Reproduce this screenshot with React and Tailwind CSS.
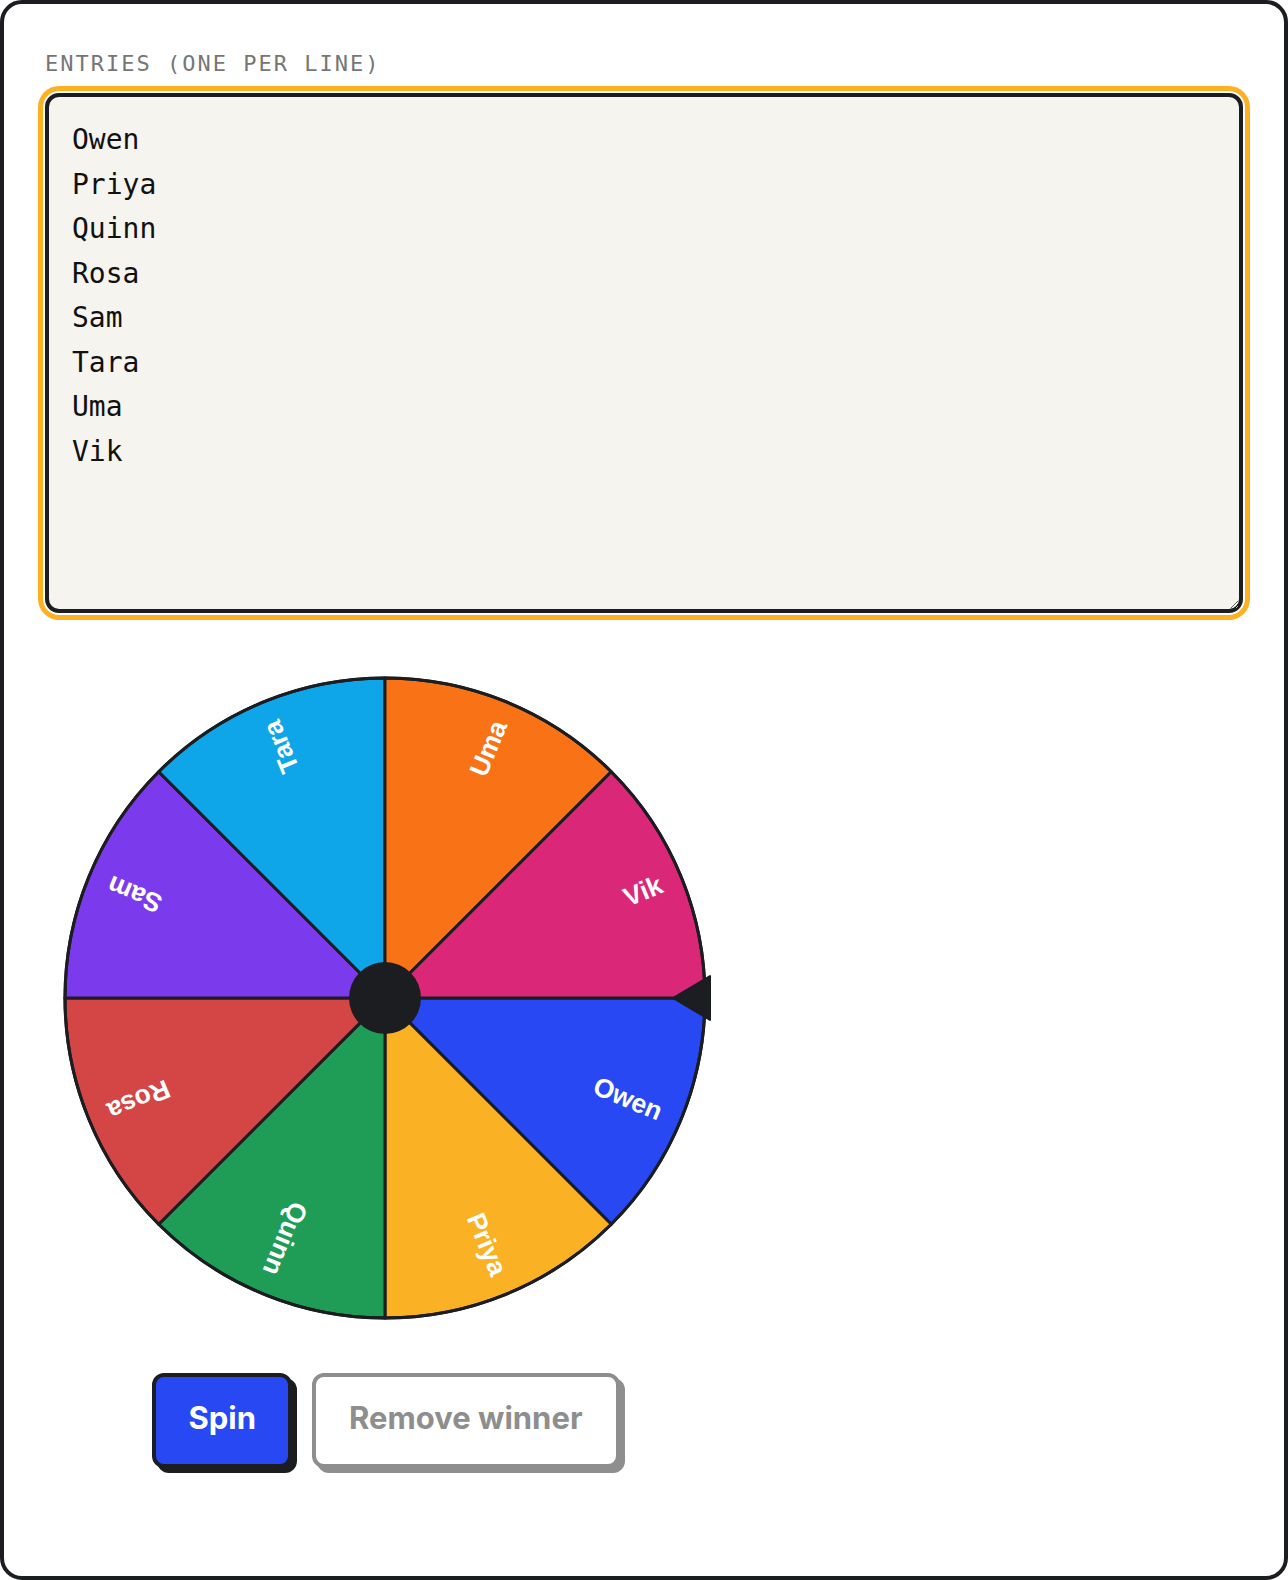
import { useState } from "react";

const ENTRIES = ["Owen", "Priya", "Quinn", "Rosa", "Sam", "Tara", "Uma", "Vik"];
const COLORS = ["#2748f3", "#fbb124", "#1f9c55", "#d44545", "#7c3aed", "#0ea5e9", "#f97316", "#db2777"];

// wheel geometry (svg units = px)
const CX = 340;
const CY = 325;
const R = 320;

function Wheel({ names }) {
  const n = names.length;
  const step = (Math.PI * 2) / n;

  return (
    <svg width="680" height="650" viewBox="0 0 680 650" className="block">
      {names.map((name, i) => {
        const a0 = i * step;
        const a1 = (i + 1) * step;
        const x0 = CX + R * Math.cos(a0);
        const y0 = CY + R * Math.sin(a0);
        const x1 = CX + R * Math.cos(a1);
        const y1 = CY + R * Math.sin(a1);
        const mid = ((i + 0.5) * 360) / n;
        return (
          <g key={name + i}>
            <path
              d={`M ${CX} ${CY} L ${x0} ${y0} A ${R} ${R} 0 0 1 ${x1} ${y1} Z`}
              fill={COLORS[i % COLORS.length]}
              stroke="#1b1d21"
              strokeWidth="3"
              strokeLinejoin="round"
            />
            <g transform={`translate(${CX} ${CY}) rotate(${mid})`}>
              <text
                x={R - 21}
                y="0"
                textAnchor="end"
                dominantBaseline="central"
                fill="#ffffff"
                fontFamily='"Liberation Sans", Arial, sans-serif'
                fontWeight="700"
                fontSize="26.5"
              >
                {name}
              </text>
            </g>
          </g>
        );
      })}
      <circle cx={CX} cy={CY} r={R} fill="none" stroke="#1b1d21" strokeWidth="3" />
      {/* hub */}
      <circle cx={CX} cy={CY} r="36" fill="#1b1d21" />
      {/* pointer */}
      <path
        d={`M ${CX + R - 32} ${CY} L ${CX + R + 5} ${CY - 22} L ${CX + R + 5} ${CY + 22} Z`}
        fill="#1b1d21"
        stroke="#1b1d21"
        strokeWidth="2"
        strokeLinejoin="round"
      />
    </svg>
  );
}

export default function App() {
  const [text, setText] = useState(ENTRIES.join("\n"));
  const names = text
    .split("\n")
    .map((s) => s.trim())
    .filter(Boolean);

  return (
    <div className="min-h-[1580px] w-full bg-white">
      <div className="min-h-[1580px] border-[4px] border-[#1b1d21] rounded-[22px] bg-white px-[41px] pt-[46px] flex flex-col">
        {/* label */}
        <label
          htmlFor="entries"
          className="block text-[22px] leading-[28px] tracking-[2px] text-[#767676] mb-[15px]"
          style={{ fontFamily: '"DejaVu Sans Mono", "Liberation Mono", monospace' }}
        >
          ENTRIES (ONE PER LINE)
        </label>

        {/* textarea with focus ring */}
        <textarea
          id="entries"
          value={text}
          onChange={(e) => setText(e.target.value)}
          spellCheck={false}
          className="block w-full h-[520px] bg-[#f5f4ef] border-[4px] border-[#1b1d21] rounded-[14px] pl-[23px] pr-[23px] pt-[21px] text-[28px] leading-[44.5px] text-[#111111] outline-none shadow-[0_0_0_2px_#ffffff,0_0_0_7px_#fdb022]"
          style={{ fontFamily: '"DejaVu Sans Mono", "Liberation Mono", monospace' }}
        />

        {/* wheel + actions */}
        <div className="w-[680px] flex flex-col items-center mt-[60px]">
          <Wheel names={names} />

          <div
            className="flex gap-5 mt-[50px] pl-[2px]"
            style={{ fontFamily: "Inter, 'Noto Sans', sans-serif" }}
          >
            <button className="h-[95px] px-[32px] pb-1 rounded-[12px] bg-[#2748f3] border-[4px] border-[#1b1d21] shadow-[5px_5px_0_#1b1d21] text-white text-[31px] font-bold">
              Spin
            </button>
            <button
              disabled
              className="h-[95px] px-[33px] pb-1 rounded-[12px] bg-white border-[4px] border-[#8e8e8e] shadow-[5px_5px_0_#8e8e8e] text-[#8e8e8e] text-[31px] font-bold"
            >
              Remove winner
            </button>
          </div>
        </div>
      </div>
    </div>
  );
}
